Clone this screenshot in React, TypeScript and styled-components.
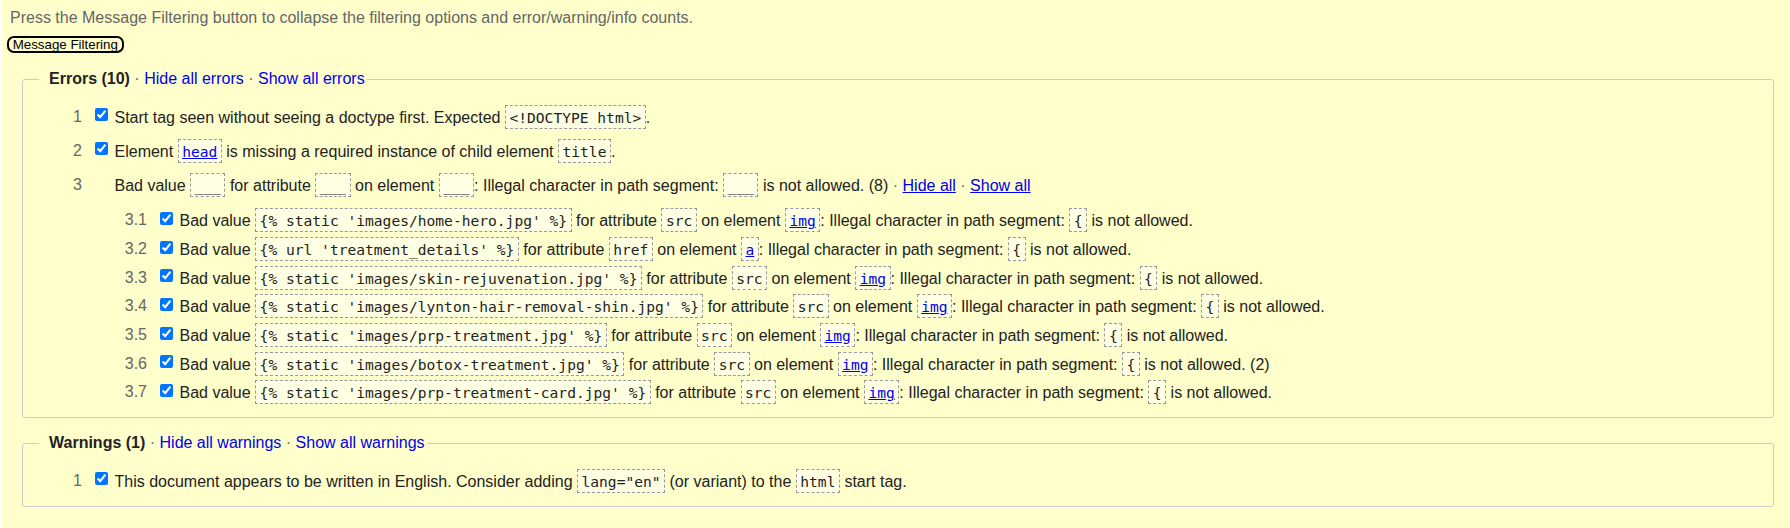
import React from 'react';
import styled, { createGlobalStyle } from 'styled-components';

const GlobalStyle = createGlobalStyle`
    html, body {
        margin: 0;
        padding: 0;
        background: #fff;
    }

    body {
        font-family: 'Liberation Sans', Arial, sans-serif;
        font-size: 16px;
        color: #222;
    }
`;

const Page = styled.div`
    margin-left: 2px;
    min-height: 527px;
    padding: 8.5px 0 1px;
    box-sizing: border-box;
    background: #ffffcc;
    overflow: hidden;
`;

const Intro = styled.p`
    margin: 0 0 0 8px;
    color: #666;
    line-height: 18px;
`;

const ButtonBar = styled.div`
    display: flex;
    margin: 9.5px 0 0 4.7px;
`;

const FilterButton = styled.button`
    height: 17px;
    margin: 0;
    padding: 0 4px;
    box-sizing: border-box;
    border: 2px solid #000;
    border-radius: 7px;
    background: transparent;
    color: #000;
    font-family: 'Liberation Sans', Arial, sans-serif;
    font-size: 13.33px;
    line-height: 13px;
`;

const Group = styled.fieldset<{ $top: number }>`
    min-width: 0;
    margin: ${p => p.$top}px 16px 0 20px;
    padding: 0 16px 13px;
    border: 1px solid #ccc;
    border-radius: 3px;
`;

const Legend = styled.legend`
    padding: 0 2px 1px 10px;
    font-size: 16px;
    line-height: 18px;
`;

const Count = styled.strong`
    font-weight: bold;
`;

const Dot = styled.span`
    color: #666;
`;

const LegendLink = styled.a`
    color: #00e;
    text-decoration: none;
`;

const InlineLink = styled.a`
    color: #00e;
    text-decoration: underline;
`;

const List = styled.div<{ $gap: number; $top: number }>`
    display: flex;
    flex-direction: column;
    gap: ${p => p.$gap}px;
    margin-top: ${p => p.$top}px;
`;

const Row = styled.div<{ $depth: number }>`
    display: flex;
    align-items: flex-start;
    height: 24px;
    padding-left: ${p => p.$depth * 65}px;
`;

const Num = styled.span`
    flex: none;
    width: 43px;
    color: #666;
    text-align: right;
    line-height: 24px;
`;

const Check = styled.input`
    flex: none;
    width: 13px;
    height: 13px;
    margin: 3.5px 0 0 12.5px;
`;

const CheckSpace = styled.span`
    flex: none;
    width: 13px;
    height: 13px;
    margin: 3.5px 0 0 12.5px;
`;

const Message = styled.span`
    margin-left: 7px;
    line-height: 24px;
    white-space: nowrap;
`;

const Code = styled.code`
    display: inline-block;
    padding: 1px 3.5px 0;
    border: 1px dashed #999;
    background: #ffffe3;
    color: #222;
    font-family: 'DejaVu Sans Mono', 'Liberation Mono', monospace;
    font-size: 14.6px;
    line-height: 21px;
    white-space: pre;
`;

const CodeLink = styled.a`
    color: #00e;
    text-decoration: underline;
`;

type BadValue = { n: string; value: string; attr: string; el: string; extra?: string };

const badValues: BadValue[] = [
    { n: '3.1', value: "{% static 'images/home-hero.jpg' %}", attr: 'src', el: 'img' },
    { n: '3.2', value: "{% url 'treatment_details' %}", attr: 'href', el: 'a' },
    { n: '3.3', value: "{% static 'images/skin-rejuvenation.jpg' %}", attr: 'src', el: 'img' },
    { n: '3.4', value: "{% static 'images/lynton-hair-removal-shin.jpg' %}", attr: 'src', el: 'img' },
    { n: '3.5', value: "{% static 'images/prp-treatment.jpg' %}", attr: 'src', el: 'img' },
    { n: '3.6', value: "{% static 'images/botox-treatment.jpg' %}", attr: 'src', el: 'img', extra: ' (2)' },
    { n: '3.7', value: "{% static 'images/prp-treatment-card.jpg' %}", attr: 'src', el: 'img' },
];

const Blank = () => <Code>___</Code>;

const App: React.FC = () => (
    <>
        <GlobalStyle />
        <Page>
            <Intro>
                Press the Message Filtering button to collapse the filtering options and error/warning/info counts.
            </Intro>
            <ButtonBar>
                <FilterButton type="button">Message Filtering</FilterButton>
            </ButtonBar>

            <Group $top={16.5}>
                <Legend>
                    <Count>Errors (10)</Count>
                    <Dot> · </Dot>
                    <LegendLink href="#">Hide all errors</LegendLink>
                    <Dot> · </Dot>
                    <LegendLink href="#">Show all errors</LegendLink>
                </Legend>

                <List $gap={10.3} $top={16}>
                    <Row $depth={0}>
                        <Num>1</Num>
                        <Check type="checkbox" defaultChecked />
                        <Message>
                            Start tag seen without seeing a doctype first. Expected <Code>&lt;!DOCTYPE html&gt;</Code>.
                        </Message>
                    </Row>
                    <Row $depth={0}>
                        <Num>2</Num>
                        <Check type="checkbox" defaultChecked />
                        <Message>
                            Element{' '}
                            <Code>
                                <CodeLink href="#">head</CodeLink>
                            </Code>{' '}
                            is missing a required instance of child element <Code>title</Code>.
                        </Message>
                    </Row>
                    <div>
                        <Row $depth={0}>
                            <Num>3</Num>
                            <CheckSpace />
                            <Message>
                                Bad value <Blank /> for attribute <Blank /> on element <Blank />: Illegal character in
                                path segment: <Blank /> is not allowed. (8)<Dot> · </Dot>
                                <InlineLink href="#">Hide all</InlineLink>
                                <Dot> · </Dot>
                                <InlineLink href="#">Show all</InlineLink>
                            </Message>
                        </Row>
                        <List $gap={4.67} $top={11.4}>
                            {badValues.map(b => (
                                <Row $depth={1} key={b.n}>
                                    <Num>{b.n}</Num>
                                    <Check type="checkbox" defaultChecked />
                                    <Message>
                                        Bad value <Code>{b.value}</Code> for attribute <Code>{b.attr}</Code> on element{' '}
                                        <Code>
                                            <CodeLink href="#">{b.el}</CodeLink>
                                        </Code>
                                        : Illegal character in path segment: <Code>{'{'}</Code> is not allowed.
                                        {b.extra}
                                    </Message>
                                </Row>
                            ))}
                        </List>
                    </div>
                </List>
            </Group>

            <Group $top={15.2}>
                <Legend>
                    <Count>Warnings (1)</Count>
                    <Dot> · </Dot>
                    <LegendLink href="#">Hide all warnings</LegendLink>
                    <Dot> · </Dot>
                    <LegendLink href="#">Show all warnings</LegendLink>
                </Legend>

                <List $gap={0} $top={16}>
                    <Row $depth={0}>
                        <Num>1</Num>
                        <Check type="checkbox" defaultChecked />
                        <Message>
                            This document appears to be written in English. Consider adding <Code>lang="en"</Code> (or
                            variant) to the <Code>html</Code> start tag.
                        </Message>
                    </Row>
                </List>
            </Group>
        </Page>
    </>
);

export default App;
